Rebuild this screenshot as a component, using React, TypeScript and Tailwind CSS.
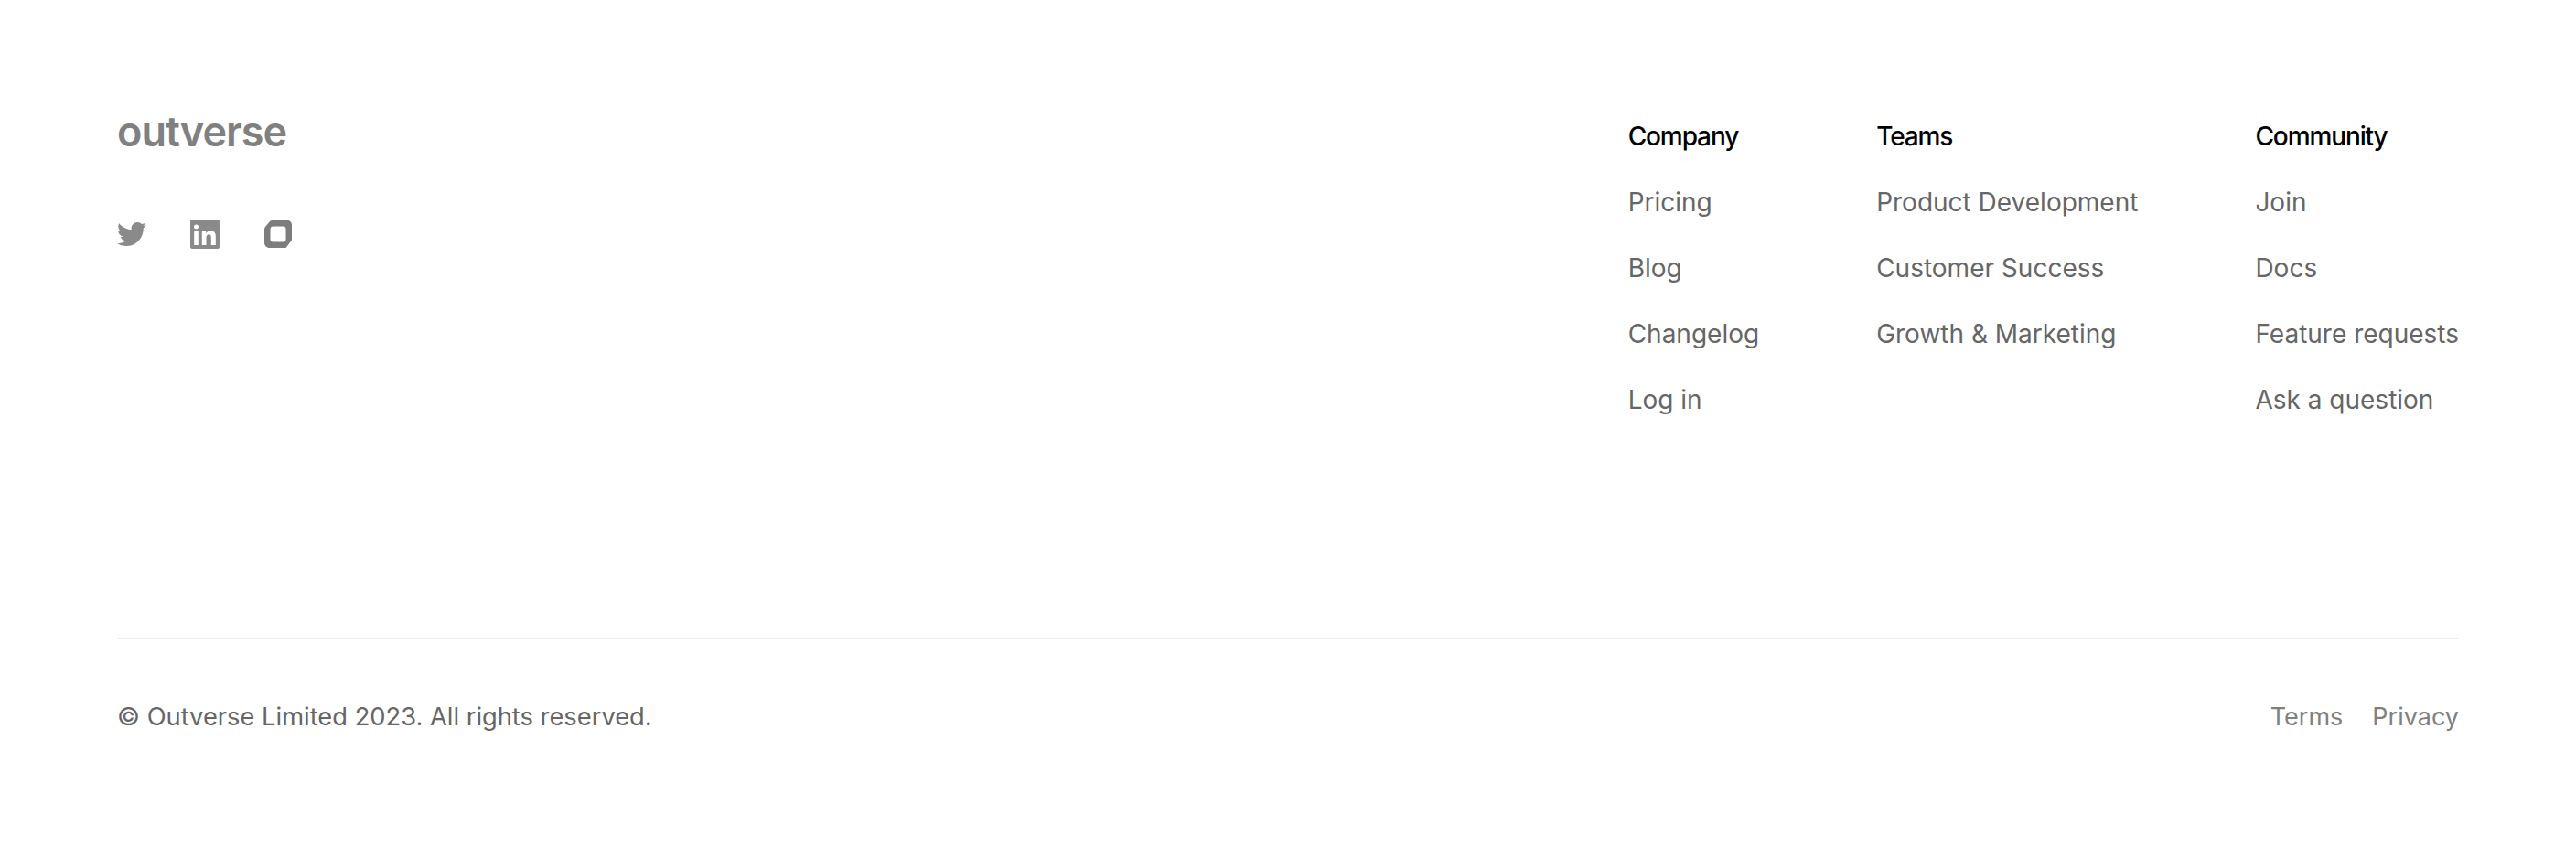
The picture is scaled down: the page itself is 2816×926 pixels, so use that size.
import { FaTwitter } from "react-icons/fa";

const columns = [
  { title: "Company", links: ["Pricing", "Blog", "Changelog", "Log in"] },
  { title: "Teams", links: ["Product Development", "Customer Success", "Growth & Marketing"] },
  { title: "Community", links: ["Join", "Docs", "Feature requests", "Ask a question"] },
];

const LinkedinIcon = () => (
  <svg viewBox="0 0 32 32" className="w-[32px] h-[32px]" fill="#8a8a8a">
    <path
      fillRule="evenodd"
      d="M2 0H30C31.100 0 32 .9 32 2V30C32 31.100 31.100 32 30 32H2C.9 32 0 31.100 0 30V2C0 .9.9 0 2 0ZM6.500 5.500C5 5.500 4 6.500 4 8S5 10.500 6.500 10.500 9 9.500 9 8 8 5.500 6.500 5.500ZM4.200 13V28H8.800V13ZM12.800 13V28H17.500V19.600C17.500 17.600 18.500 16.300 20.300 16.300S22.800 17.500 22.800 19.500V28H27.800V18.500C27.800 14.500 26.300 12.500 22.300 12.500 20 12.500 18.300 13.500 17.300 15V13Z"
    />
  </svg>
);

const OutverseMark = () => (
  <svg viewBox="0 0 32 32" className="w-[32px] h-[32px]" fill="#7d7d7d">
    <path
      fillRule="evenodd"
      d="M9.500 1H26C29 1 31 3 31 6V22.500L24.500 31H6.500C3.500 31 1 28.500 1 25.500V10.500C1 9.500 1.300 8.800 2 8L7 2C7.600 1.300 8.500 1 9.500 1ZM10.500 7.500C9 7.500 7.500 8.500 7.500 10.500V22C7.500 23.500 9 24.500 10.500 24.500H22C23.500 24.500 24.500 23.500 24.500 22V10C24.500 8.500 23.500 7.500 22 7.500Z"
    />
  </svg>
);

const App = () => {
  return (
    <div className="min-h-[926px] bg-white px-[128px] pt-[120px] font-['Inter',sans-serif]">
      <div className="flex justify-between h-[579px] border-b-2 border-[#efefef]">
        <div>
          <div className="text-[45px] leading-[46px] font-semibold text-[#808080] tracking-[-1px] pt-[1px]">outverse</div>
          <div className="flex items-center gap-[48px] mt-[73px] text-[#8a8a8a]">
            <FaTwitter className="w-[32px] h-[32px]" />
            <LinkedinIcon />
            <OutverseMark />
          </div>
        </div>
        <div className="flex gap-[128px] pt-[9px]">
          {columns.map((col) => (
            <div key={col.title} className="flex flex-col gap-[32px]">
              <h4 className="text-[28px] leading-[40px] font-medium text-black tracking-[-1.1px]">{col.title}</h4>
              {col.links.map((link) => (
                <a key={link} className="text-[28px] leading-[40px] text-[#666666] whitespace-nowrap">
                  {link}
                </a>
              ))}
            </div>
          ))}
        </div>
      </div>
      <div className="flex justify-between items-center mt-[65px] leading-[40px]">
        <p className="text-[27.3px] text-[#666666]">© Outverse Limited 2023. All rights reserved.</p>
        <div className="flex gap-[32px] text-[27px] text-[#808080]">
          <a>Terms</a>
          <a>Privacy</a>
        </div>
      </div>
    </div>
  );
};

export default App;
